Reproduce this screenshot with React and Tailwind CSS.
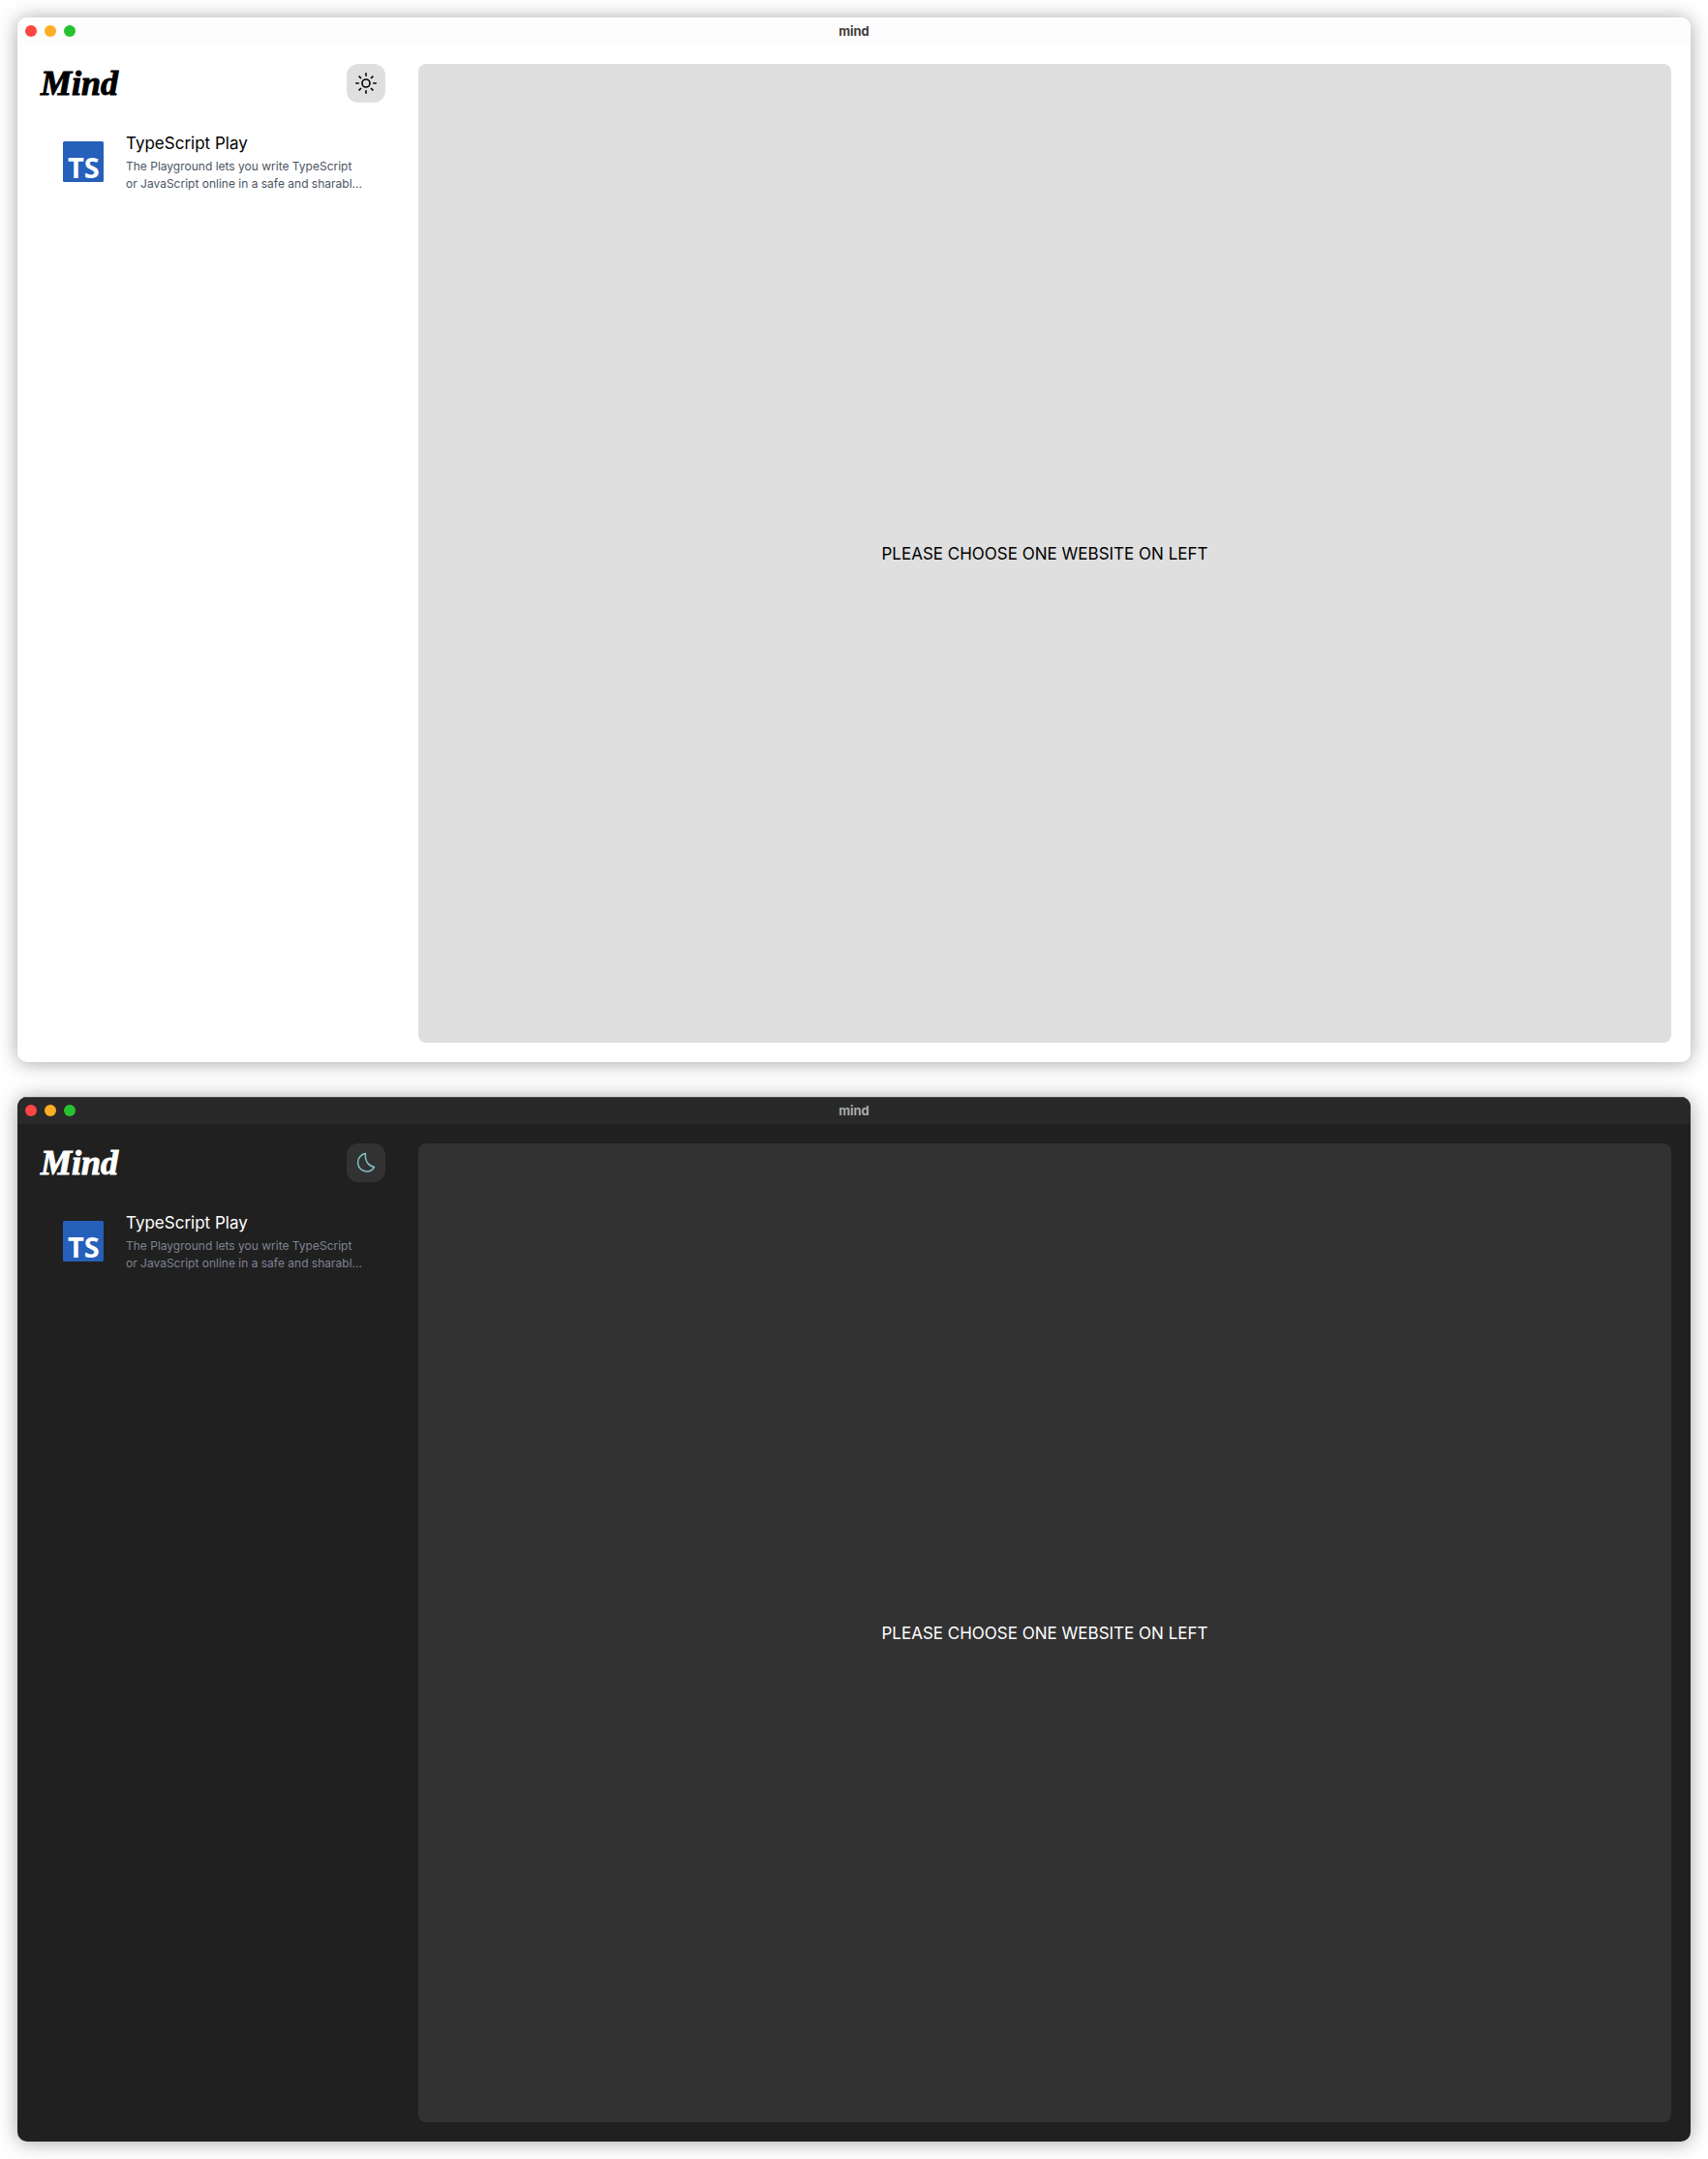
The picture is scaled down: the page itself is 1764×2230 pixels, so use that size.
import React from "react";

const themes = {
  light: {
    frame: "bg-white",
    bar: "bg-[#fdfdfd] text-[#3c3c3c]",
    text: "text-black",
    muted: "text-[#4b5563]",
    surface: "bg-[#dfdfdf]",
    icon: "text-black",
  },
  dark: {
    frame: "bg-[#202020]",
    bar: "bg-[#292929] text-[#a9a9a9] shadow-[inset_0_1px_0_#484848]",
    text: "text-white",
    muted: "text-[#7e8492]",
    surface: "bg-[#323232]",
    icon: "text-[#81c1c4]",
  },
};

function SunIcon() {
  return (
    <svg viewBox="0 0 24 24" className="size-6" fill="none" stroke="currentColor" strokeWidth="1.6" aria-hidden="true">
      <circle cx="12" cy="12" r="4" />
      <path d="M12 1.2v3.6M12 19.2v3.6M1.2 12h3.6M19.2 12h3.6M4.6 4.6l2.4 2.4M17 17l2.4 2.4M4.6 19.4L7 17M17 7l2.4-2.4" />
    </svg>
  );
}

function MoonIcon() {
  return (
    <svg viewBox="0 0 24 24" className="size-6" fill="none" stroke="currentColor" strokeWidth="1.5" strokeLinejoin="round" aria-hidden="true">
      <path d="M11.4 2.6C6.8 3.3 3.6 7.1 3.6 11.8C3.6 16.9 7.5 21 12.7 21C16.2 21 19.1 19.2 20.6 16.4C15.2 15.8 10.6 10.5 11.4 2.6Z" />
    </svg>
  );
}

function TypeScriptLogo() {
  return (
    <svg viewBox="0 0 42 42" className="size-[42px] shrink-0 overflow-visible" aria-hidden="true">
      <rect width="42" height="42" rx="1.5" fill="#2560ba" />
      <text x="5" y="38" fill="#fff" fontFamily="Open Sans, sans-serif" fontSize="29" fontWeight="700">
        TS
      </text>
    </svg>
  );
}

function MindWindow({ theme }) {
  const t = themes[theme];
  return (
    <section className={`flex flex-1 flex-col overflow-hidden rounded-[10px] shadow-[0_1px_20px_rgba(0,0,0,0.36)] ${t.frame} ${t.text}`}>
      <header className={`grid h-7 grid-cols-3 items-center px-2 ${t.bar}`}>
        <div className="flex gap-2">
          <button type="button" aria-label="Close" className="size-3 rounded-full bg-[#fe4543]" />
          <button type="button" aria-label="Minimize" className="size-3 rounded-full bg-[#fdae25]" />
          <button type="button" aria-label="Zoom" className="size-3 rounded-full bg-[#28c231]" />
        </div>
        <h2 className="text-center text-[13px] leading-4 font-bold">mind</h2>
      </header>
      <div className="flex flex-1 gap-[34px] p-5">
        <aside className="w-[360px] shrink-0">
          <div className="flex h-10 items-center justify-between">
            <h1 className="pl-1 font-['Liberation_Serif',serif] text-4xl font-bold italic [-webkit-text-stroke:1px_currentColor]">
              Mind
            </h1>
            <button
              type="button"
              aria-label="Toggle theme"
              className={`flex size-10 items-center justify-center rounded-xl ${t.surface} ${t.icon}`}
            >
              {theme === "light" ? <SunIcon /> : <MoonIcon />}
            </button>
          </div>
          <a href="#playground" className="mt-7 flex items-center gap-[23px] pl-[27px]">
            <TypeScriptLogo />
            <div className="flex flex-col gap-px whitespace-nowrap">
              <h3 className="text-[17px] leading-7">TypeScript Play</h3>
              <p className={`text-xs leading-[18px] ${t.muted}`}>
                The Playground lets you write TypeScript
                <br />
                or JavaScript online in a safe and sharabl...
              </p>
            </div>
          </a>
        </aside>
        <main className={`flex flex-1 items-center justify-center rounded-lg text-[17px] leading-7 ${t.surface}`}>
          PLEASE CHOOSE ONE WEBSITE ON LEFT
        </main>
      </div>
    </section>
  );
}

export default function App() {
  return (
    <div className="flex min-h-screen flex-col gap-9 bg-white p-[18px] font-['Inter',sans-serif]">
      <MindWindow theme="light" />
      <MindWindow theme="dark" />
    </div>
  );
}
